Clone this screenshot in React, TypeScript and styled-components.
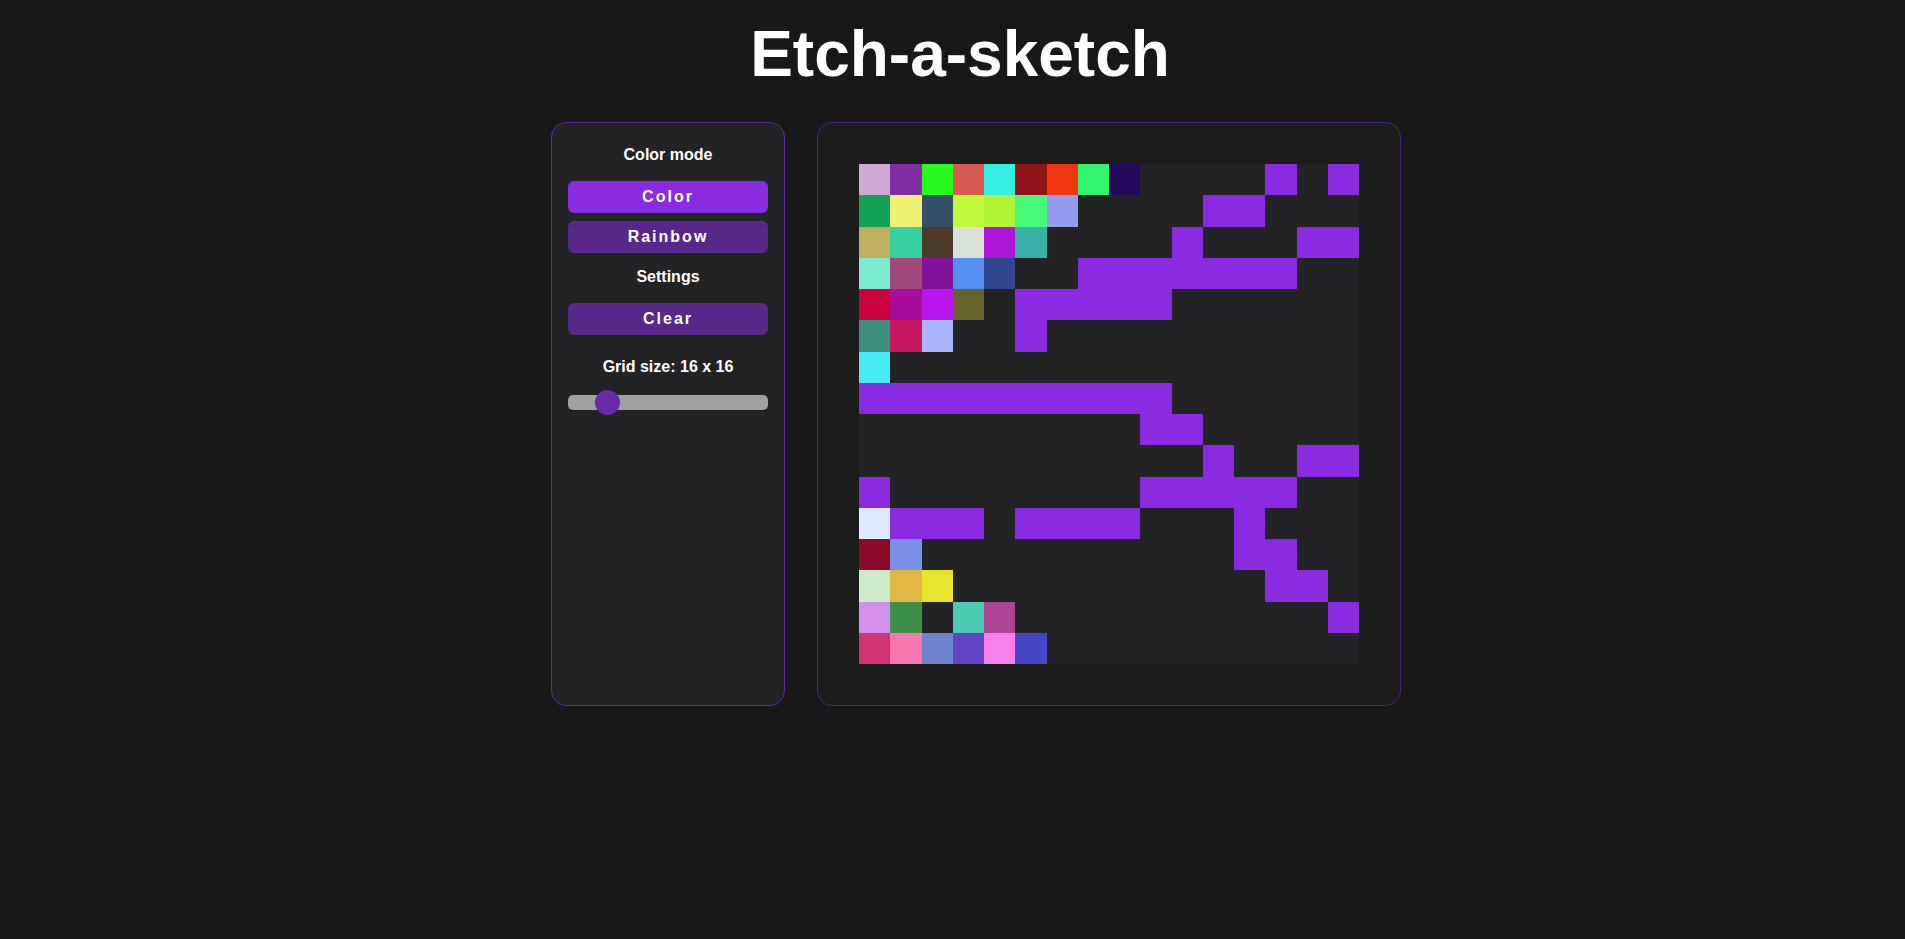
import React, { useState } from "react";
import styled, { createGlobalStyle } from "styled-components";

const P = "#8a2be2";
const _ = null;

type CellColor = string | null;

const gridData: CellColor[][] = [
    ["#cfaad4", "#7f2ca5", "#2afb1f", "#d65a50", "#35efe0", "#911518", "#f23512", "#2ff56f", "#25085c", _, _, _, _, P, _, P],
    ["#12a357", "#f0f075", "#36506b", "#c0f93a", "#b0f436", "#48f97a", "#929cf0", _, _, _, _, P, P, _, _, _],
    ["#beb060", "#36cfa0", "#4c3b29", "#d8e2d8", "#ad17d8", "#39b0a5", _, _, _, _, P, _, _, _, P, P],
    ["#7cebd3", "#a1497c", "#83129a", "#538ef0", "#30478f", _, _, P, P, P, P, P, P, P, _, _],
    ["#c9043d", "#a80c9c", "#b915ef", "#66632c", _, P, P, P, P, P, _, _, _, _, _, _],
    ["#3f9081", "#c61561", "#a9b6fb", _, _, P, _, _, _, _, _, _, _, _, _, _],
    ["#48ecf5", _, _, _, _, _, _, _, _, _, _, _, _, _, _, _],
    [P, P, P, P, P, P, P, P, P, P, _, _, _, _, _, _],
    [_, _, _, _, _, _, _, _, _, P, P, _, _, _, _, _],
    [_, _, _, _, _, _, _, _, _, _, _, P, _, _, P, P],
    [P, _, _, _, _, _, _, _, _, P, P, P, P, P, _, _],
    ["#deeaff", P, P, P, _, P, P, P, P, _, _, _, P, _, _, _],
    ["#8a0a2a", "#7890e8", _, _, _, _, _, _, _, _, _, _, P, P, _, _],
    ["#cbebc9", "#e3b745", "#e8e32c", _, _, _, _, _, _, _, _, _, _, P, P, _],
    ["#d290ea", "#3e8f48", _, "#4bcbb3", "#ad4496", _, _, _, _, _, _, _, _, _, _, P],
    ["#d03473", "#f878b1", "#6c84cf", "#6244c2", "#f880ea", "#4347c6", _, _, _, _, _, _, _, _, _, _],
];

type Mode = "color" | "rainbow";

export default function App() {
    const [mode, setMode] = useState<Mode>("color");
    const [size, setSize] = useState(16);

    return (
        <>
            <GlobalStyle />
            <Page>
                <Title>Etch-a-sketch</Title>
                <Main>
                    <Sidebar>
                        <Label>Color mode</Label>
                        <ModeButton $active={mode === "color"} $mt={17} onClick={() => setMode("color")}>
                            Color
                        </ModeButton>
                        <ModeButton $active={mode === "rainbow"} $mt={8} onClick={() => setMode("rainbow")}>
                            Rainbow
                        </ModeButton>
                        <Label $mt={15}>Settings</Label>
                        <ModeButton $mt={17}>Clear</ModeButton>
                        <Label $mt={23}>
                            Grid size: {size} x {size}
                        </Label>
                        <SizeSlider
                            type="range"
                            min={1}
                            max={100}
                            value={size}
                            onChange={(e) => setSize(Number(e.target.value))}
                        />
                    </Sidebar>
                    <Board>
                        <Grid>
                            {gridData.map((row, r) =>
                                row.map((color, c) => <Cell key={`${r}-${c}`} $color={color} />)
                            )}
                        </Grid>
                    </Board>
                </Main>
            </Page>
        </>
    );
}

const GlobalStyle = createGlobalStyle`
    html, body {
        margin: 0;
        background-color: #181818;
        color: #ffffff;
        font-family: "Liberation Sans", Arial, sans-serif;
    }
`;

const Page = styled.div`
    min-height: 939px;
    padding-left: 15px;
    box-sizing: border-box;
`;

const Title = styled.h1`
    margin: 17px 0 31px;
    font-size: 64px;
    line-height: 74px;
    font-weight: 700;
    text-align: center;
    color: #ffffff;
`;

const Main = styled.main`
    display: flex;
    justify-content: center;
    gap: 32px;
    padding-left: 32px;
`;

const Sidebar = styled.aside`
    width: 234px;
    box-sizing: border-box;
    display: flex;
    flex-direction: column;
    padding: 23px 16px 16px;
    background-color: #232325;
    border: 1px solid #5c2a9e;
    border-radius: 15px;
`;

const Label = styled.div<{ $mt?: number }>`
    margin-top: ${({ $mt }) => $mt ?? 0}px;
    font-size: 16px;
    line-height: 18px;
    font-weight: 700;
    text-align: center;
    color: #ffffff;
`;

const ModeButton = styled.button<{ $active?: boolean; $mt?: number }>`
    margin-top: ${({ $mt }) => $mt ?? 0}px;
    height: 32px;
    width: 100%;
    border: none;
    border-radius: 6px;
    background-color: ${({ $active }) => ($active ? "#8a2be2" : "#57288a")};
    color: #ffffff;
    font-family: "Liberation Sans", Arial, sans-serif;
    font-size: 16px;
    font-weight: 700;
    letter-spacing: 2px;
    cursor: pointer;
`;

const SizeSlider = styled.input`
    margin: 19px 0 0;
    width: 100%;
    height: 15px;
    appearance: none;
    -webkit-appearance: none;
    background: #a0a0a0;
    border-radius: 5px;
    outline: none;

    &::-webkit-slider-thumb {
        -webkit-appearance: none;
        appearance: none;
        width: 25px;
        height: 25px;
        border-radius: 50%;
        background: #6b2aa9;
        border: none;
        cursor: pointer;
    }
`;

const Board = styled.section`
    width: 584px;
    height: 584px;
    box-sizing: border-box;
    padding: 41px;
    background-color: #1c1c1c;
    border: 1px solid #4a2380;
    border-radius: 15px;
`;

const Grid = styled.div`
    width: 500px;
    height: 500px;
    display: grid;
    grid-template-columns: repeat(16, 1fr);
    grid-template-rows: repeat(16, 1fr);
    background-color: #232326;
`;

const Cell = styled.div<{ $color: CellColor }>`
    background-color: ${({ $color }) => $color ?? "transparent"};
`;
